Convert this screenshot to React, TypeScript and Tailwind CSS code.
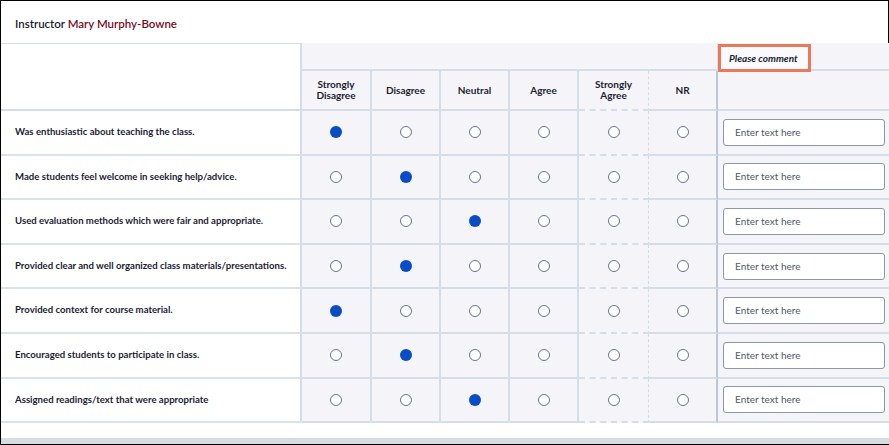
const columns = ['Strongly Disagree', 'Disagree', 'Neutral', 'Agree', 'Strongly Agree', 'NR'];

const questions = [
  { text: 'Was enthusiastic about teaching the class.', value: 0 },
  { text: 'Made students feel welcome in seeking help/advice.', value: 1 },
  { text: 'Used evaluation methods which were fair and appropriate.', value: 2 },
  { text: 'Provided clear and well organized class materials/presentations.', value: 1 },
  { text: 'Provided context for course material.', value: 0 },
  { text: 'Encouraged students to participate in class.', value: 1 },
  { text: 'Assigned readings/text that were appropriate', value: 2 },
];

// 세로 구분선 - NR 앞은 점선, 코멘트 앞은 진한 실선
const cellBorder = (i: number) => {
  if (i === 4) return 'border-r border-dashed border-r-[#d3dbe6]';
  if (i === 5) return 'border-r-2 border-r-[#bcc6d4]';
  return 'border-r-2 border-r-[#d5dde8]';
};

const Radio = ({ checked }: { checked: boolean }) =>
  checked ? (
    <span className="block w-[12px] h-[12px] rounded-full bg-[#0a4bc6]" />
  ) : (
    <span className="block w-[12px] h-[12px] rounded-full bg-white border-[1.5px] border-[#68758a]" />
  );

const GRID = 'grid grid-cols-[301px_70px_69px_69px_69px_70px_69px_1fr]';

export default function App() {
  return (
    <div className="w-[889px] h-[445px] bg-white border-l border-t border-b border-black overflow-hidden flex flex-col font-['Lato',sans-serif] text-[#1c1d33]">
      {/* 강사 헤더 */}
      <div className="h-[42px] shrink-0 border-r border-black flex items-center pl-[14px] pt-[4px] text-[11.5px] font-semibold">
        Instructor&nbsp;<span className="text-[#7a0b22]">Mary Murphy-Bowne</span>
      </div>

      {/* 표 머리 */}
      <div className={`${GRID} w-[900px]`}>
        <div className="row-span-2 bg-white border-t border-t-[#d5dde8] border-r-2 border-r-[#d5dde8] border-b-2 border-b-[#d5dde8]" />
        <div className="col-span-6 h-[28px] bg-[#f5f5f9] border-b-2 border-b-[#d5dde8]" />
        <div className="h-[28px] bg-[#f5f5f9] border-l border-l-[#d5dde8] border-b-2 border-b-[#d5dde8] -ml-[1px] relative">
          <div className="absolute left-0 top-[1px] h-[28px] w-[93px] bg-[#fafafc] border-[3px] border-[#e8795a] flex items-center pl-[8px] text-[10px] font-bold italic">
            Please comment
          </div>
        </div>
        {columns.map((c, i) => (
          <div
            key={c}
            className={`h-[40px] bg-[#f5f5f9] border-b-2 border-b-[#d5dde8] ${cellBorder(i)} flex items-center justify-center text-center text-[10px] font-bold leading-[11px] px-2`}
          >
            {c}
          </div>
        ))}
        <div className="h-[40px] bg-[#f5f5f9] border-b-2 border-b-[#d5dde8]" />
      </div>

      {/* 문항 */}
      <div className="w-[900px]">
        {questions.map((q) => (
          <div key={q.text} className={`${GRID} h-[44.6px]`}>
            <div className="bg-white border-r-2 border-r-[#d5dde8] border-b-2 border-b-[#dbe2ea] flex items-center pl-[14px] text-[9.6px] font-bold">
              {q.text}
            </div>
            {columns.map((c, i) => (
              <div
                key={c}
                className={`bg-[#f5f5f9] border-b-2 border-b-[#d5dde8] ${cellBorder(i)} flex items-center justify-center`}
              >
                <Radio checked={q.value === i} />
              </div>
            ))}
            <div className="bg-[#f5f5f9] border-b-2 border-b-[#d5dde8] flex items-center pl-[5px] pr-[16px]">
              <div className="w-[162px] h-[27px] bg-white border border-[#8d97a6] rounded-[3px] flex items-center pl-[11px] text-[10px] text-[#4f5968]">
                Enter text here
              </div>
            </div>
          </div>
        ))}
      </div>

      <div className="flex-1" />
      <div className="h-[6px] shrink-0 bg-[#d8dbe1]" />
    </div>
  );
}
